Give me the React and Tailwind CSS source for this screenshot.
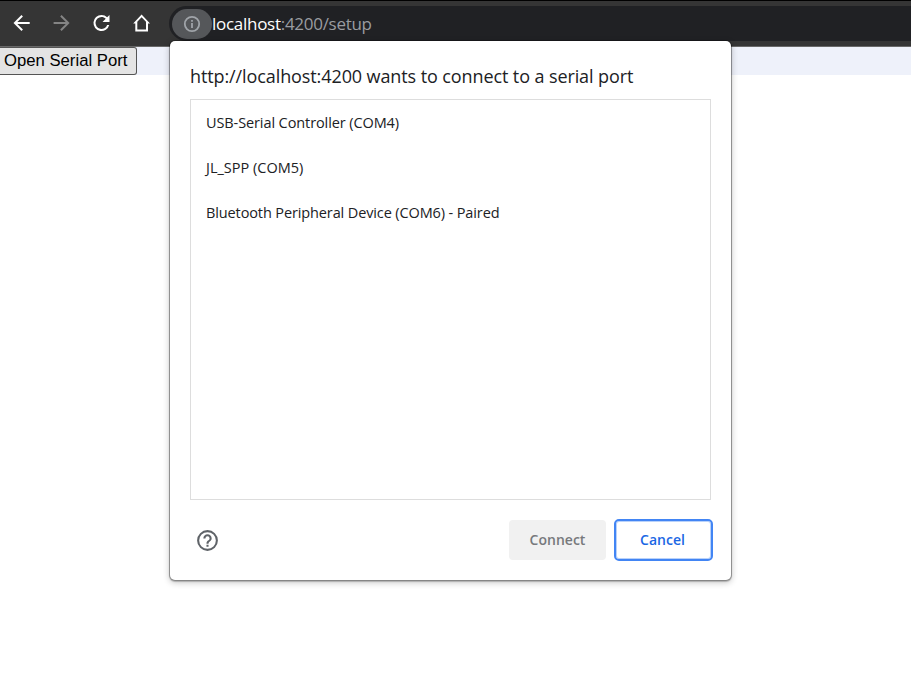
const ui = "font-['Open_Sans','Noto_Sans',sans-serif]";

const ports = [
  { name: 'USB-Serial Controller (COM4)', tracking: 'tracking-[-0.1px]' },
  { name: 'JL_SPP (COM5)', tracking: 'tracking-[0px]' },
  { name: 'Bluetooth Peripheral Device (COM6) - Paired', tracking: 'tracking-[-0.12px]' },
];

function NavIcon({ d, className = 'text-white' }) {
  return (
    <svg viewBox="0 0 24 24" className={`block size-6 shrink-0 ${className}`} fill="currentColor">
      <path d={d} />
    </svg>
  );
}

function Toolbar() {
  return (
    <header className="flex h-[47px] border-t border-b border-t-black border-b-[#686868] bg-[#353535] pt-[5px]">
      <nav className="flex h-[34px] w-[169px] shrink-0 items-center gap-4 pl-[9.5px]">
        <NavIcon d="M19.7 11H7.33l5.59-5.59L11.5 4l-8 8 8 8 1.41-1.41L7.33 13H19.7v-2z" />
        <NavIcon
          className="text-[#848484]"
          d="M11.6 4l-1.41 1.41L15.77 11H3.6v2h12.17l-5.58 5.59L11.6 20l8-8z"
        />
        <NavIcon d="M17.15 6.35A7.96 7.96 0 0 0 11.5 4a8 8 0 1 0 7.73 10h-2.08A6 6 0 1 1 11.5 6c1.66 0 3.14.69 4.22 1.78L12.5 11h7V4l-2.35 2.35z" />
        <NavIcon d="M11.6 3.4L3.2 12.4H5.3V20.4H18V12.4H20L11.6 3.4zM7.3 18.4V10.7L11.6 6.2L16 10.7V18.4H7.3z" />
      </nav>
      <div className="flex h-[35px] flex-1 items-center rounded-l-full bg-[#202124] pl-[3px]">
        <span className="flex h-[30px] w-10 shrink-0 items-center justify-center rounded-full bg-[#55575a]">
          <svg viewBox="0 0 20 20" className="size-5" fill="none" stroke="#a0a4a9" strokeWidth="1.8">
            <circle cx="10" cy="10" r="7.2" />
            <path d="M10 9v5M10 6v1.7" />
          </svg>
        </span>
        <span className={`${ui} whitespace-nowrap text-[17px] leading-6 tracking-[-0.28px] text-[#9a9ca0]`}>
          <span className="text-white">localhost</span>:4200/setup
        </span>
      </div>
    </header>
  );
}

function SerialDialog() {
  return (
    <section
      className={`${ui} absolute left-[170px] top-[41px] flex h-[539px] w-[561px] flex-col rounded-[5px] bg-white px-5 pt-[22px] text-[#202124] shadow-[0_0_0_1px_rgba(0,0,0,0.22),0_1px_1px_1px_rgba(0,0,0,0.2),0_2px_6px_1px_rgba(0,0,0,0.2)]`}
    >
      <h1 className="h-9 whitespace-nowrap text-[18px] leading-[26px] tracking-[-0.1px]">
        http://localhost:4200 wants to connect to a serial port
      </h1>
      <ul className="h-[401px] w-[521px] shrink-0 border border-[#dddddd]">
        {ports.map((port) => (
          <li
            key={port.name}
            className={`flex h-[45px] items-center whitespace-nowrap pl-[15px] text-[14.5px] ${port.tracking}`}
          >
            {port.name}
          </li>
        ))}
      </ul>
      <footer className="mt-[19px] flex h-[42px] w-[523px] items-center text-[14px] font-semibold">
        <svg viewBox="0 0 24 24" className="ml-[5px] size-[25px]" fill="#5f6368">
          <path d="M11 18h2v-2h-2v2zm1-16a10 10 0 1 0 0 20 10 10 0 0 0 0-20zm0 18a8 8 0 1 1 0-16 8 8 0 0 1 0 16zm0-14a4 4 0 0 0-4 4h2a2 2 0 1 1 4 0c0 2-3 1.75-3 5h2c0-2.25 3-2.5 3-5a4 4 0 0 0-4-4z" />
        </svg>
        <button className="ml-auto h-10 w-[97px] rounded-[4px] bg-[#f1f1f1] pb-0.5 text-[#77797c]">
          Connect
        </button>
        <button className="ml-2 h-[42px] w-[99px] rounded-[5px] border-2 border-[#4285f4] pr-0.5 pb-0.5 text-[#1a67e4] shadow-[inset_0_0_0_1px_#b9d2fa]">
          Cancel
        </button>
      </footer>
    </section>
  );
}

export default function App() {
  return (
    <div className="relative h-[683px] w-[911px] overflow-hidden bg-white">
      <Toolbar />
      <main className="h-7 bg-[#eef1fa]">
        <button className="block h-7 w-[137px] whitespace-nowrap rounded-r-[3px] border border-l-0 border-[#555555] bg-[#e4e4e4] pb-px pl-1 text-left font-['Liberation_Sans',Arial,sans-serif] text-[16.7px] leading-[25px] text-black">
          Open Serial Port
        </button>
      </main>
      <SerialDialog />
    </div>
  );
}
